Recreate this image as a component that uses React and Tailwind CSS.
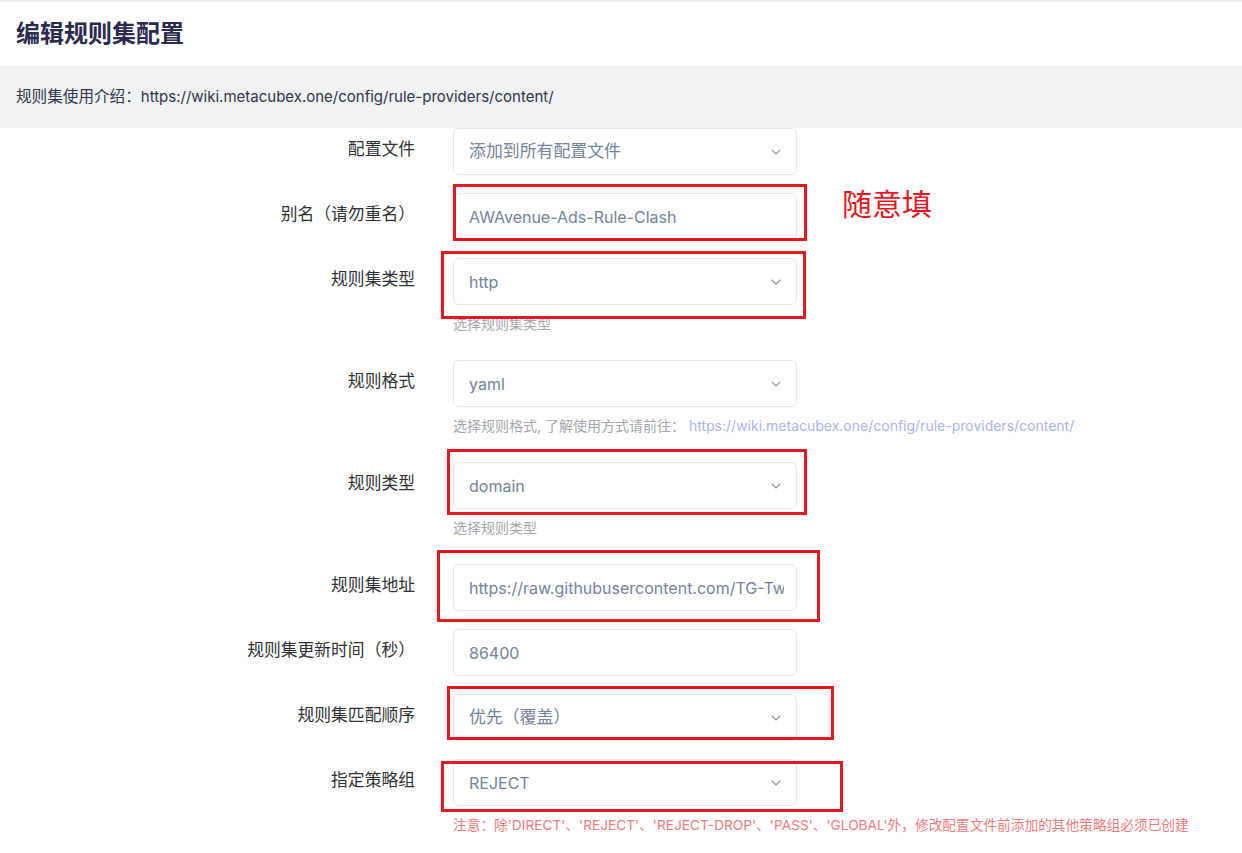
import React from "react";
import { ChevronDown } from "lucide-react";

const FONT = { fontFamily: "Inter, 'Noto Sans CJK SC', sans-serif" };

// red annotation boxes drawn over the screenshot
function Mark({ cls }) {
  return <div className={"pointer-events-none absolute border-[3px] border-[#e8161e] " + cls}></div>;
}

function Field({ value, select, mark, extra, cjk }) {
  return (
    <div className="relative w-[344px]">
      <div className="flex h-[47px] items-center rounded-md border border-[#e3e6eb] bg-white pl-[15px] pr-[12px]">
        <div
          className={
            "flex-1 overflow-hidden whitespace-nowrap text-[#74829a] " + (cjk ? "text-[16.9px]" : "text-[16px]")
          }
        >
          {value}
        </div>
        {select && <ChevronDown className="ml-2 h-4 w-4 shrink-0 text-[#8793a6]" strokeWidth={1.6} />}
      </div>
      {mark && <Mark cls={mark} />}
      {extra}
    </div>
  );
}

function Row({ label, children, help }) {
  return (
    <div className="mb-[18px] flex">
      <div className="flex h-[47px] w-[415px] shrink-0 items-center justify-end pb-[3px] text-[16.8px] text-[#303133]">
        {label}
      </div>
      <div className="ml-[38px]">
        {children}
        {help && <div className="mb-[10px] mt-[11px] text-[14px] leading-4 text-[#a3a6ad]">{help}</div>}
      </div>
    </div>
  );
}

export default function App() {
  return (
    <div className="min-h-[853px] bg-white" style={FONT}>
      <div className="flex h-[66px] items-center border-t-2 border-[#eef0f3] px-4">
        <h1 className="text-[24px] font-bold text-[#2b2a4f]">编辑规则集配置</h1>
      </div>
      <div className="flex h-[62px] items-center bg-[#f1f2f4] px-4 text-[15px] text-[#2f3446]">
        <span className="text-[15.6px]">规则集使用介绍：</span>
        <span>https://wiki.metacubex.one/config/rule-providers/content/</span>
      </div>

      <div>
        <Row label="配置文件">
          <Field value="添加到所有配置文件" select cjk />
        </Row>
        <Row label="别名（请勿重名）">
          <Field
            value="AWAvenue-Ads-Rule-Clash"
            mark="left-[0px] top-[-9px] right-[-10px] bottom-[-1px]"
            extra={
              <div className="absolute left-[389px] top-[-9px] whitespace-nowrap text-[30px] leading-[40px] text-[#e8161e]">
                随意填
              </div>
            }
          />
        </Row>
        <Row label="规则集类型" help="选择规则集类型">
          <Field value="http" select mark="left-[-12px] top-[-7px] right-[-9px] bottom-[-14px]" />
        </Row>
        <Row
          label="规则格式"
          help={
            <span>
              选择规则格式, 了解使用方式请前往：{" "}
              <span className="text-[#a9b4f2]">https://wiki.metacubex.one/config/rule-providers/content/</span>
            </span>
          }
        >
          <Field value="yaml" select />
        </Row>
        <Row label="规则类型" help="选择规则类型">
          <Field value="domain" select mark="left-[-6px] top-[-13px] right-[-10px] bottom-[-6px]" />
        </Row>
        <Row label="规则集地址">
          <Field
            value="https://raw.githubusercontent.com/TG-Twilight/AWAvenue-Ads-Rule/main/Filters/AWAvenue-Ads-Rule-Clash.yaml"
            mark="left-[-16px] top-[-14px] right-[-23px] bottom-[-11px]"
          />
        </Row>
        <Row label="规则集更新时间（秒）">
          <Field value="86400" />
        </Row>
        <Row label="规则集匹配顺序">
          <Field value="优先（覆盖）" select cjk mark="left-[-6px] top-[-8px] right-[-37px] bottom-[1px]" />
        </Row>
        <Row
          label="指定策略组"
          help={
            <span className="text-[13.7px] text-[#f37b7b]">
              注意：除'DIRECT'、'REJECT'、'REJECT-DROP'、'PASS'、'GLOBAL'外，修改配置文件前添加的其他策略组必须已创建
            </span>
          }
        >
          <Field value="REJECT" select mark="left-[-12px] top-[2px] right-[-46px] bottom-[-6px]" />
        </Row>
      </div>
    </div>
  );
}
